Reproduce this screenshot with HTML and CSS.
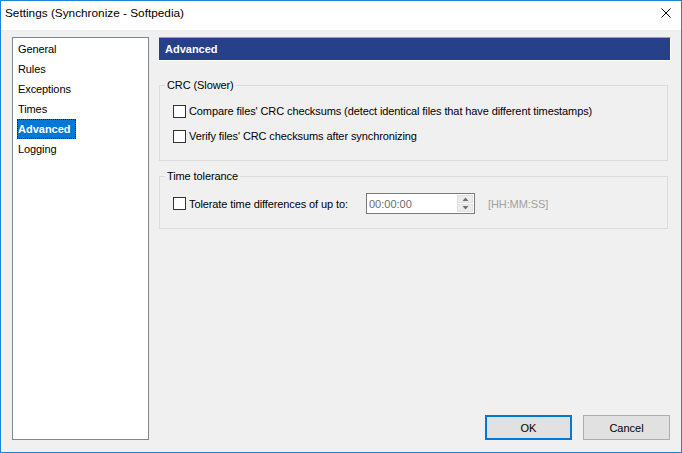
FILE: index.html
```html
<!DOCTYPE html>
<html lang="en">
<head>
<meta charset="utf-8">
<title>Settings (Synchronize - Softpedia)</title>
<link rel="stylesheet" href="styles.css">
</head>
<body>
<div class="window">
  <div class="titlebar">
    <span class="title">Settings (Synchronize - Softpedia)</span>
    <svg class="close" width="10" height="10" viewBox="0 0 10 10"><path d="M0.5 0.5 L9.5 9.5 M9.5 0.5 L0.5 9.5" stroke="#000" stroke-width="1" fill="none"/></svg>
  </div>
  <div class="content">
    <ul class="nav">
      <li class="nav-item"><span>General</span></li>
      <li class="nav-item"><span>Rules</span></li>
      <li class="nav-item"><span>Exceptions</span></li>
      <li class="nav-item"><span>Times</span></li>
      <li class="nav-item selected"><span>Advanced</span></li>
      <li class="nav-item"><span>Logging</span></li>
    </ul>
    <div class="main">
      <div class="header">Advanced</div>
      <fieldset class="group group-crc">
        <legend>CRC (Slower)</legend>
        <label class="check-row"><span class="box"></span><span class="check-text">Compare files' CRC checksums (detect identical files that have different timestamps)</span></label>
        <label class="check-row row-gap"><span class="box"></span><span class="check-text">Verify files' CRC checksums after synchronizing</span></label>
      </fieldset>
      <fieldset class="group group-time">
        <legend>Time tolerance</legend>
        <div class="tol-row">
          <label class="check-row tol-check"><span class="box"></span><span class="check-text">Tolerate time differences of up to:</span></label>
          <div class="spin">
            <span class="spin-value">00:00:00</span>
            <div class="spin-btns">
              <span class="spin-btn"><svg width="7" height="4" viewBox="0 0 7 4"><path d="M0.5 4 L3.5 0.5 L6.5 4 Z" fill="#707070"/></svg></span>
              <span class="spin-btn"><svg width="7" height="4" viewBox="0 0 7 4"><path d="M0.5 0 L3.5 3.5 L6.5 0 Z" fill="#707070"/></svg></span>
            </div>
          </div>
          <span class="hint">[HH:MM:SS]</span>
        </div>
      </fieldset>
      <div class="buttons">
        <button class="btn btn-default">OK</button>
        <button class="btn">Cancel</button>
      </div>
    </div>
  </div>
</div>
</body>
</html>
```

FILE: styles.css
```css
* { box-sizing: border-box; }
html, body { margin: 0; padding: 0; }
body {
  font-family: "Liberation Sans", Arial, sans-serif;
  font-size: 11px;
  letter-spacing: -0.1px;
  color: #000;
  background: #f0f0f0;
}
.window {
  width: 682px;
  height: 453px;
  border: 1px solid #1883d7;
  background: #f0f0f0;
  display: flex;
  flex-direction: column;
}
.titlebar {
  height: 29px;
  flex: none;
  background: #fff;
  display: flex;
  align-items: flex-start;
  justify-content: space-between;
  padding: 4px 10px 0 4px;
}
.title {
  font-size: 11.8px;
  letter-spacing: 0;
  line-height: 16px;
}
.close { margin-top: 3px; display: block; }
.content {
  flex: 1;
  display: flex;
  padding: 7px 10px 12px 11px;
  gap: 10px;
}
.nav {
  width: 137px;
  height: 403px;
  margin: 0;
  padding: 1px 0 0 4px;
  list-style: none;
  background: #fff;
  border: 1px solid #828790;
}
.nav-item {
  height: 20px;
  line-height: 20px;
}
.nav-item span {
  display: inline-block;
  padding: 0 1px;
  height: 20px;
}
.nav-item.selected span {
  background: #0078d7;
  color: #fff;
  font-weight: bold;
  letter-spacing: 0;
  padding: 0 5px 0 1px;
  outline: 1px dotted #222;
  outline-offset: -1px;
}
.main {
  width: 512px;
  height: 403px;
  display: flex;
  flex-direction: column;
}
.header {
  height: 24px;
  line-height: 22px;
  background: #264089;
  color: #fff;
  font-weight: bold;
  letter-spacing: 0;
  padding-left: 6px;
  border-top: 1px solid #a0a0a0;
  border-bottom: 1px solid #fff;
  border-right: 1px solid #fff;
}
.group {
  width: 509px;
  margin: 0;
  border: 1px solid #dcdcdc;
  padding: 0 0 14px 5px;
  min-width: 0;
}
.group legend {
  padding: 0 2px;
  line-height: 16px;
  font-size: 11px;
}
.group-crc { margin-top: 16px; padding-top: 8px; }
.group-time { margin-top: 7px; padding-top: 9px; }
.check-row {
  display: flex;
  align-items: center;
  height: 20px;
  padding-left: 8px;
}
.row-gap { margin-top: 5px; }
.box {
  width: 13px;
  height: 13px;
  flex: none;
  background: #fff;
  border: 1px solid #333;
  margin-right: 3px;
}
.tol-row {
  display: flex;
  align-items: center;
  height: 21px;
}
.tol-check { width: 201px; flex: none; height: 21px; }
.spin {
  width: 109px;
  height: 21px;
  background: #fff;
  border: 1px solid #7a7a7a;
  display: flex;
  align-items: center;
  justify-content: space-between;
  padding: 0 1px 0 2px;
}
.spin-value { color: #6d6d6d; letter-spacing: 0; }
.spin-btns {
  display: flex;
  flex-direction: column;
  gap: 1px;
}
.spin-btn {
  width: 16px;
  height: 8px;
  background: #ececec;
  border: 1px solid #e0e0e0;
  display: flex;
  align-items: center;
  justify-content: center;
}
.spin-btn svg { display: block; }
.hint {
  color: #a0a0a0;
  margin-left: 13px;
}
.buttons {
  margin-top: auto;
  display: flex;
  justify-content: flex-end;
  gap: 11px;
  padding-right: 1px;
}
.btn {
  width: 87px;
  height: 25px;
  margin: 0;
  font-family: "Liberation Sans", Arial, sans-serif;
  font-size: 11px;
  color: #000;
  background: #e1e1e1;
  border: 1px solid #adadad;
  border-radius: 0;
  padding: 0;
}
.btn-default { border: 2px solid #0078d7; }
```
